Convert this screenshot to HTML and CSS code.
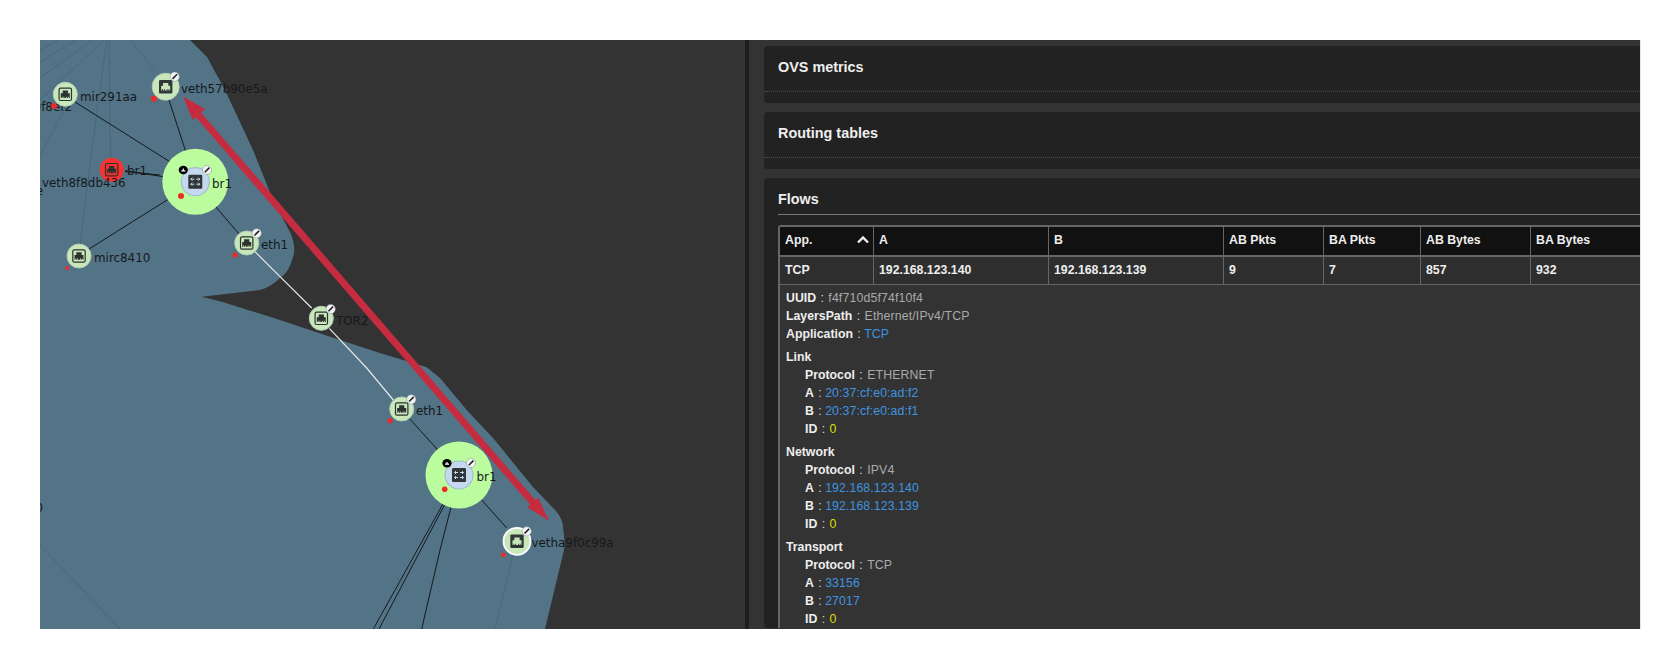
FILE: index.html
```html
<!DOCTYPE html>
<html lang="en">

<head>
    <meta charset="UTF-8">
    <title>Topology and flows</title>
    <link rel="stylesheet" href="styles.css">
</head>

<body>

    <div class="frame">
        <div class="topology">
            <!-- viewBox starts at the frame corner so the numbers below are page coordinates -->
            <svg class="graph" viewBox="40 40 705 589" width="705" height="589">
                <defs>
                    <symbol id="portGlyph" viewBox="-7 -7 14 14" overflow="visible">
                        <path d="M-4.5 3.8V-1H-2.6V-3.8H2.6V-1H4.5V3.8H3.6V2.4H2.8V3.8H1.8V2.4H1V3.8H-1V2.4H-1.8V3.8H-2.8V2.4H-3.6V3.8Z" />
                    </symbol>
                    <g id="portLight">
                        <rect class="port-box" x="-6.2" y="-6.2" width="12.4" height="12.4" rx="1.5" />
                        <use href="#portGlyph" class="glyph-dark" x="-7" y="-7" width="14" height="14" />
                    </g>
                    <g id="portDark">
                        <rect class="port-solid" x="-6.7" y="-6.7" width="13.4" height="13.4" rx="1.2" />
                        <use href="#portGlyph" class="glyph-light" x="-7" y="-7" width="14" height="14" />
                    </g>
                    <g id="switchIcon">
                        <rect class="port-solid" x="-7" y="-7" width="14" height="14" rx="1.2" />
                        <path class="switch-lines" d="M-4.5 -2.5H-1M-4.5 -2.5L-3 -4M-4.5 -2.5L-3 -1M1 -2.5H4.5M4.5 -2.5L3 -4M4.5 -2.5L3 -1M-4.5 2.5H-1M-4.5 2.5L-3 1M-4.5 2.5L-3 4M1 2.5H4.5M4.5 2.5L3 1M4.5 2.5L3 4" />
                    </g>
                    <g id="pin">
                        <circle class="pin-disc" r="4.6" />
                        <path class="pin-mark" d="M-2.2 2.2L2.4 -2.4" />
                    </g>
                    <g id="capture">
                        <ellipse class="capture-disc" rx="4.6" ry="4.2" />
                        <path class="capture-mark" d="M-2 .8H2M0 -1.4V.8" />
                    </g>
                </defs>

                <path class="hull" d="M40 40H190L207 57L225 90L253 150L273 200L290 232C295 243 295 252 293 257C290 268 286 274 280 278C274 284 267 288 260 290L201.7 296.7L221.7 301.7L280 320L330 336.7L380 353L426.7 367.3L440 378L466.7 410L493 438L533 487L556.7 511.7C561 518 563 522 563 527C564 535 565 542 564 550L545 629H40Z" />

                <path class="faint" d="M109 40L110.7 160M93.3 140L80 245M106.7 40L93.3 140M130 40L155 70M40 157L70 98M40 62L76 40M40 78L92 40M40 100L104 40M58 40L40 50M40 545L120 629M513 555L495 629" />

                <path class="wire" d="M75 102L183 170M169 100L191 168M125 170.7L180 179.3M125 171.6L160 175M89 249L183 190M204 193L239 234M409.3 418.3L445 458M469.3 486L506.7 528M451.7 488.3L373.3 629M453.3 488.3L379 629M455.7 489L440 550L421.7 629" />
                <path class="wire-on" d="M255 251.7L280 276.7L311.7 308M329.3 328.3L366.7 368L393.3 400" />

                <!-- upper host -->
                <g transform="translate(195.3 181.7)">
                    <circle class="halo" r="33" />
                    <circle class="switch-node" r="14" />
                    <use href="#switchIcon" />
                </g>
                <use href="#capture" x="183.3" y="170" />
                <use href="#pin" x="207" y="170" />
                <circle class="dot" cx="181" cy="196" r="3" />
                <text class="label" x="212" y="188">br1</text>

                <g transform="translate(165.7 86.7)">
                    <circle class="node" r="13.5" />
                    <use href="#portDark" />
                </g>
                <use href="#pin" x="174.7" y="76.7" />
                <circle class="dot" cx="154" cy="98.7" r="3" />
                <text class="label" x="181" y="93">veth57b90e5a</text>

                <text class="label" x="72" y="111" text-anchor="end">veth9f8ef2</text>
                <g transform="translate(65.3 94.3)">
                    <circle class="node" r="12" />
                    <use href="#portLight" />
                </g>
                <circle class="dot" cx="54" cy="106" r="3" />
                <text class="label" x="80" y="101">mir291aa</text>

                <g transform="translate(111.7 169.7)">
                    <circle class="node-down" r="12" />
                    <use href="#portLight" />
                </g>
                <text class="label" x="127" y="175">br1</text>
                <text class="label" x="42" y="187">veth8f8db436</text>
                <text class="label" x="43" y="195" text-anchor="end">e</text>

                <g transform="translate(79 256)">
                    <circle class="node" r="12" />
                    <use href="#portLight" />
                </g>
                <circle class="dot" cx="67.3" cy="268" r="2" />
                <text class="label" x="94" y="262">mirc8410</text>

                <g transform="translate(246.7 243)">
                    <circle class="node" r="12" />
                    <use href="#portLight" />
                </g>
                <use href="#pin" x="256.7" y="233.3" />
                <circle class="dot" cx="235" cy="255" r="2.6" />
                <text class="label" x="261" y="249">eth1</text>

                <!-- fabric -->
                <g transform="translate(321.3 318.3)">
                    <circle class="node" r="12" />
                    <use href="#portLight" />
                </g>
                <use href="#pin" x="330.7" y="309" />
                <text class="label" x="336" y="325">TOR2</text>

                <!-- lower host -->
                <g transform="translate(401.7 409)">
                    <circle class="node" r="12" />
                    <use href="#portLight" />
                </g>
                <use href="#pin" x="411.3" y="399.3" />
                <circle class="dot" cx="390" cy="420.7" r="2.6" />
                <text class="label" x="416" y="415">eth1</text>

                <g transform="translate(459 475)">
                    <circle class="halo" r="33.5" />
                    <circle class="switch-node" r="14" />
                    <use href="#switchIcon" />
                </g>
                <use href="#capture" x="447" y="463.3" />
                <use href="#pin" x="471" y="463" />
                <circle class="dot" cx="444.7" cy="489.3" r="2.8" />
                <text class="label" x="476.5" y="481">br1</text>

                <g transform="translate(517 541.3)">
                    <circle class="node-picked" r="13.5" />
                    <use href="#portDark" />
                </g>
                <use href="#pin" x="526.7" y="531.3" />
                <circle class="dot" cx="503.3" cy="555" r="2.4" />
                <text class="label" x="531.5" y="547">vetha9f0c99a</text>

                <text class="label" x="43" y="512" text-anchor="end">0</text>

                <!-- flow direction overlay -->
                <line class="flow-line" x1="196" y1="112" x2="536" y2="506" />
                <polygon class="flow-head" points="183.3,96.7 205,109 192.7,120" />
                <polygon class="flow-head" points="549,521 538.3,497.7 527.3,507.3" />
            </svg>
        </div>

        <div class="divider"></div>

        <div class="panel">
            <div class="card">
                <h3 class="card-title dotted">OVS metrics</h3>
            </div>
            <div class="card">
                <h3 class="card-title dotted">Routing tables</h3>
            </div>
            <div class="card card-flows">
                <h3 class="card-title solid">Flows</h3>
                <table class="flows">
                    <colgroup>
                        <col class="col-app">
                        <col class="col-ip">
                        <col class="col-ip">
                        <col class="col-ab-pkts">
                        <col class="col-ba-pkts">
                        <col class="col-ab-bytes">
                        <col class="col-ba-bytes">
                    </colgroup>
                    <thead>
                        <tr>
                            <th>
                                <span class="sort-head">App.
                                    <svg class="chevron" viewBox="0 0 12 8" width="12" height="8"><path d="M1 6.5L6 1.5L11 6.5" /></svg>
                                </span>
                            </th>
                            <th>A</th>
                            <th>B</th>
                            <th>AB Pkts</th>
                            <th>BA Pkts</th>
                            <th>AB Bytes</th>
                            <th>BA Bytes</th>
                        </tr>
                    </thead>
                    <tbody>
                        <tr class="flow-row">
                            <td>TCP</td>
                            <td>192.168.123.140</td>
                            <td>192.168.123.139</td>
                            <td>9</td>
                            <td>7</td>
                            <td>857</td>
                            <td>932</td>
                        </tr>
                        <tr>
                            <td colspan="7" class="detail">
                                <div class="kv"><b>UUID</b> : <span class="str">f4f710d5f74f10f4</span></div>
                                <div class="kv"><b>LayersPath</b> : <span class="str">Ethernet/IPv4/TCP</span></div>
                                <div class="kv"><b>Application</b> : <span class="link">TCP</span></div>

                                <div class="section">Link</div>
                                <div class="kv sub"><b>Protocol</b> : <span class="str">ETHERNET</span></div>
                                <div class="kv sub"><b>A</b> : <span class="link">20:37:cf:e0:ad:f2</span></div>
                                <div class="kv sub"><b>B</b> : <span class="link">20:37:cf:e0:ad:f1</span></div>
                                <div class="kv sub"><b>ID</b> : <span class="num">0</span></div>

                                <div class="section">Network</div>
                                <div class="kv sub"><b>Protocol</b> : <span class="str">IPV4</span></div>
                                <div class="kv sub"><b>A</b> : <span class="link">192.168.123.140</span></div>
                                <div class="kv sub"><b>B</b> : <span class="link">192.168.123.139</span></div>
                                <div class="kv sub"><b>ID</b> : <span class="num">0</span></div>

                                <div class="section">Transport</div>
                                <div class="kv sub"><b>Protocol</b> : <span class="str">TCP</span></div>
                                <div class="kv sub"><b>A</b> : <span class="link">33156</span></div>
                                <div class="kv sub"><b>B</b> : <span class="link">27017</span></div>
                                <div class="kv sub"><b>ID</b> : <span class="num">0</span></div>
                            </td>
                        </tr>
                    </tbody>
                </table>
            </div>
        </div>
    </div>

</body>

</html>
```

FILE: styles.css
```css
html,
body {
    height: 100%;
}

body {
    margin: 0;
    padding: 40px 40px 40px;
    box-sizing: border-box;
    background-color: #fff;
    font-family: 'Liberation Sans', Arial, sans-serif;
    overflow: hidden;
}

.frame {
    display: flex;
    height: 589px;
    background-color: #333;
    overflow: hidden;
    border-right: 1px solid #e4e4e4;
    margin-right: -1px;
}

/* topology */

.topology {
    flex: 0 0 705px;
    overflow: hidden;
}

.graph {
    display: block;
}

.hull {
    fill: #537387;
}

.faint {
    fill: none;
    stroke: #4a687b;
    stroke-width: 1;
}

.wire {
    fill: none;
    stroke: #14191c;
    stroke-width: 1;
}

.wire-on {
    fill: none;
    stroke: #e6e6e6;
    stroke-width: 1.2;
}

.node {
    fill: #c8e8bc;
    stroke: #b4ceb0;
    stroke-width: 1;
}

.node-picked {
    fill: #c8e8bc;
    stroke: #fff;
    stroke-width: 1.8;
}

.node-down {
    fill: #fb3232;
}

.halo {
    fill: #bafc9e;
}

.switch-node {
    fill: #c4d9ef;
    stroke: #a9bccf;
    stroke-width: 1.2;
}

.port-box {
    fill: none;
    stroke: #2d3130;
    stroke-width: 1.2;
}

.port-solid {
    fill: #333639;
}

.glyph-dark {
    fill: #2d3130;
}

.glyph-light {
    fill: #c8e8bc;
}

.switch-lines {
    fill: none;
    stroke: #c4d9ef;
    stroke-width: 1;
}

.pin-disc {
    fill: #f4f4f4;
    stroke: #8a9aa4;
    stroke-width: .6;
}

.pin-mark {
    stroke: #222;
    stroke-width: 1.6;
}

.capture-disc {
    fill: #000;
}

.capture-mark {
    stroke: #fff;
    stroke-width: 1.2;
}

.dot {
    fill: #ee2b2b;
}

.label {
    font-family: 'DejaVu Sans', sans-serif;
    font-size: 11.9px;
    fill: #15191c;
}

.flow-line {
    stroke: #c62c3f;
    stroke-width: 7;
}

.flow-head {
    fill: #c62c3f;
}

.divider {
    flex: 0 0 4px;
    background-color: #1f1f1f;
}

/* right panel */

.panel {
    flex: 1;
    min-width: 0;
    padding: 6px 0 0 15px;
}

.card {
    background-color: #222;
    border-radius: 4px 0 0 4px;
    margin-bottom: 9px;
    padding-bottom: 11px;
    overflow: hidden;
}

.card-title {
    margin: 0;
    height: 46px;
    box-sizing: border-box;
    padding: 13px 0 0 14px;
    font-size: 14.4px;
    line-height: 17px;
    font-weight: bold;
    color: #eee;
}

.card-title.dotted {
    border-bottom: 1px dotted #4c4c4c;
}

.card-title.solid {
    height: 37px;
    padding-left: 0;
    border-bottom: 1px solid #777;
}

.card-flows {
    padding: 0 0 0 14px;
}

/* flows table */

.flows {
    margin-top: 10px;
    width: 872px;
    table-layout: fixed;
    border-collapse: separate;
    border-spacing: 0;
    border-top: 2px solid #666;
    border-left: 2px solid #666;
    border-top-left-radius: 3px;
    font-size: 12.3px;
}

.col-app {
    width: 94px;
}

.col-ip {
    width: 175px;
}

.col-ab-pkts {
    width: 100px;
}

.col-ba-pkts {
    width: 97px;
}

.col-ab-bytes {
    width: 110px;
}

.col-ba-bytes {
    width: 121px;
}

.flows th {
    height: 25px;
    padding: 0 0 3px 5px;
    box-sizing: content-box;
    background-color: #111;
    color: #eee;
    text-align: left;
    font-weight: bold;
    border-right: 1px solid #666;
    border-bottom: 2px solid #666;
}

.sort-head {
    display: flex;
    align-items: center;
    justify-content: space-between;
    padding-right: 4px;
}

.chevron path {
    fill: none;
    stroke: #eee;
    stroke-width: 2.4;
}

.flow-row td {
    height: 26px;
    padding: 0 0 1px 5px;
    background-color: #2e2e2e;
    color: #eee;
    font-weight: bold;
    border-right: 1px solid #666;
    border-bottom: 1px solid #666;
}

.flows td.detail {
    background-color: #333;
    padding: 4px 0 0 6px;
    color: #ddd;
}

.kv {
    height: 18px;
    line-height: 18px;
    white-space: nowrap;
}

.kv b {
    color: #eee;
    margin-right: 1px;
}

.kv.sub {
    padding-left: 19px;
}

.section {
    height: 18px;
    line-height: 18px;
    margin-top: 5px;
    font-weight: bold;
    color: #eee;
}

.str {
    color: #aaa;
    margin-left: 1px;
    letter-spacing: .15px;
}

.link {
    color: #3f93e0;
    letter-spacing: .1px;
}

.num {
    color: #dddd00;
    margin-left: 1px;
}
```
